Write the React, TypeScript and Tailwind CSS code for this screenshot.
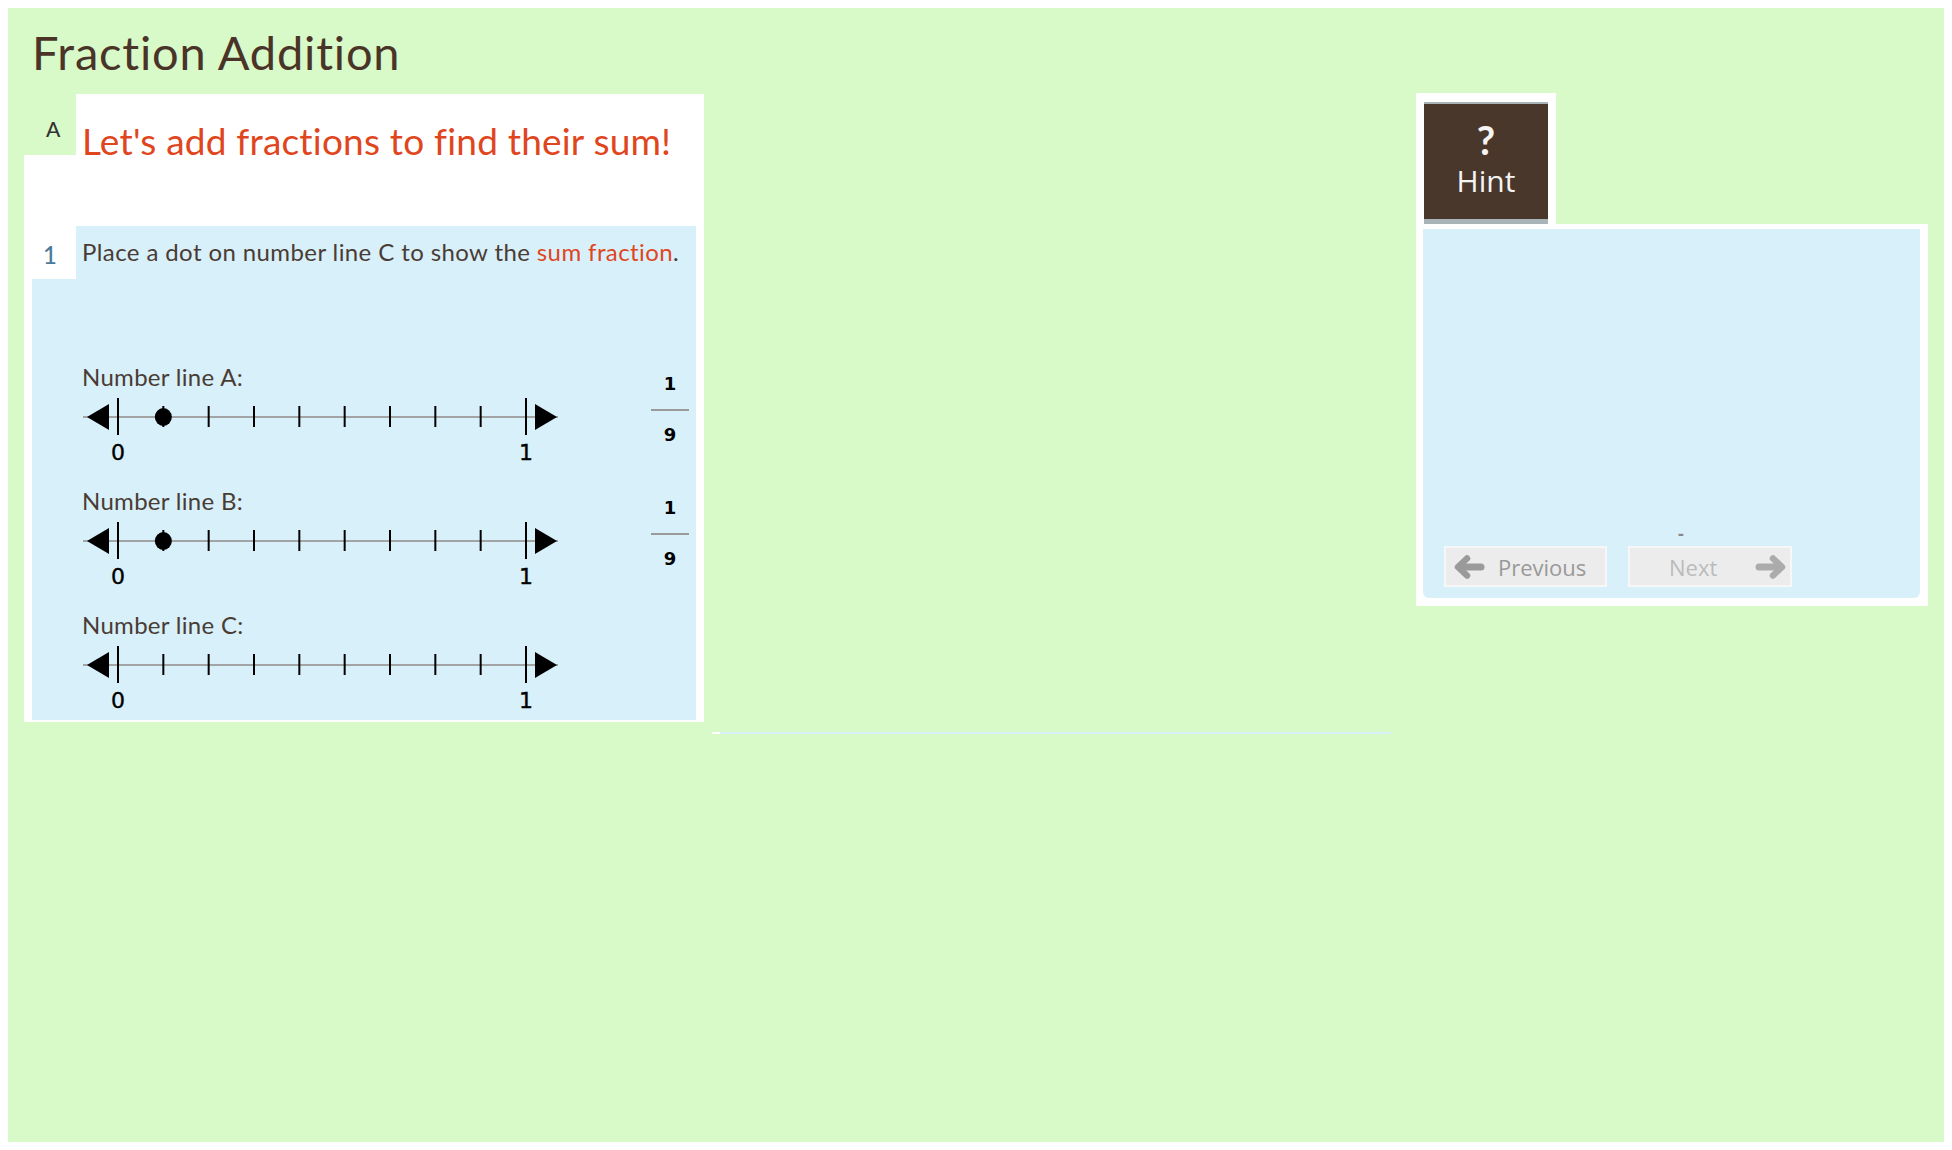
const body = { fontFamily: "Lato, 'Open Sans', sans-serif" };
const ui = { fontFamily: "'Open Sans', 'Noto Sans', sans-serif" };
const digits = { fontFamily: "'DejaVu Sans', Verdana, sans-serif" };

const NumberLine = ({ dot }: { dot?: boolean }) => {
  const step = 408 / 9;
  const ticks = Array.from({ length: 8 }).map((_, i) => 38 + (i + 1) * step);

  return (
    <svg width="480" height="70" viewBox="0 0 480 70" className="block">
      <line x1="3" y1="22" x2="478" y2="22" stroke="#a3a3a3" strokeWidth="2" />
      <polygon points="7,22 29,9 29,35" fill="#000" />
      <polygon points="477,22 455,9 455,35" fill="#000" />
      <line x1="38" y1="3" x2="38" y2="40" stroke="#000" strokeWidth="2" />
      <line x1="446" y1="3" x2="446" y2="40" stroke="#000" strokeWidth="2" />
      {ticks.map((x) => (
        <line key={x} x1={x} y1="11" x2={x} y2="32" stroke="#000" strokeWidth="2" />
      ))}
      {dot && <ellipse cx={38 + step} cy="22" rx="8.5" ry="9" fill="#000" />}
      <text x="38" y="65" textAnchor="middle" fontSize="22" fill="#000" stroke="#000" strokeWidth="0.4" style={digits}>
        0
      </text>
      <text x="446" y="65" textAnchor="middle" fontSize="22" fill="#000" stroke="#000" strokeWidth="0.4" style={digits}>
        1
      </text>
    </svg>
  );
};

// thick arrow like the hint pager buttons
const Arrow = ({ dir, color }: { dir: "left" | "right"; color: string }) => (
  <svg width="31" height="24" viewBox="0 0 31 24" className={dir === "right" ? "-scale-x-100" : ""}>
    <line x1="7" y1="12" x2="27" y2="12" stroke={color} strokeWidth="7" strokeLinecap="round" />
    <polyline points="13,3.5 4,12 13,20.5" fill="none" stroke={color} strokeWidth="6.5" strokeLinecap="round" strokeLinejoin="round" />
  </svg>
);

const Fraction = () => (
  <div className="flex w-[38px] flex-col items-center pt-[19px] text-[18px] leading-none text-black" style={digits}>
    <span className="font-semibold">1</span>
    <div className="mt-[16px] h-[2px] w-full bg-[#9a9a9a]" />
    <span className="mt-[15px] font-semibold">9</span>
  </div>
);

const Section = ({ name, dot, fraction, last }: { name: string; dot?: boolean; fraction?: boolean; last?: boolean }) => (
  <div className={`flex ${last ? "h-[116px]" : "h-[124px]"}`}>
    <div className="w-[480px]">
      <div className="h-[39px] pt-[9px] pl-[2px] text-[24px] leading-none tracking-[0.3px] text-[#4a3c34]">{name}</div>
      <NumberLine dot={dot} />
    </div>
    {fraction && (
      <div className="ml-[91px]">
        <Fraction />
      </div>
    )}
  </div>
);

const LeftPanel = () => (
  <div className="mt-px w-[680px] shrink-0" style={body}>
    <div className="flex h-[61px]">
      <div className="w-[52px] pt-[24px] pl-[22px] text-[21px] leading-none font-medium text-[#333]">A</div>
      <div className="flex-1 bg-white pt-[28px] pl-[6px] text-[37px] leading-none tracking-[0.2px] text-[#e0461e]">
        Let's add fractions to find their sum!
      </div>
    </div>
    <div className="h-[567px] bg-white px-2 pt-[71px] pb-[2px]">
      <div className="flex h-[53px]">
        <div className="w-[44px] bg-white pt-[17px] pl-[11px] text-[24px] leading-none font-medium text-[#4a7a9a]">1</div>
        <div className="flex-1 bg-[#d8f0fa] pt-[14px] pl-[6px] text-[24px] leading-none tracking-[0.4px] text-[#4a3c34]">
          Place a dot on number line C to show the <span className="text-[#e0461e]">sum fraction</span>.
        </div>
      </div>
      <div className="h-[441px] bg-[#d8f0fa] pt-[77px] pl-12">
        <Section name="Number line A:" dot fraction />
        <Section name="Number line B:" dot fraction />
        <Section name="Number line C:" last />
      </div>
    </div>
  </div>
);

const RightPanel = () => (
  <div className="w-[512px] shrink-0" style={ui}>
    <div className="w-[140px] bg-white px-2 pt-[9px]">
      <div className="flex h-[122px] flex-col items-center border-t-2 border-b-[5px] border-[#a9b4b8] bg-[#4a372c] pt-[16px] text-[#f4f4f4]">
        <span className="h-[38px] text-[40px] font-bold leading-none" style={body}>?</span>
        <span className="mt-[8px] text-[30px] leading-none">Hint</span>
      </div>
    </div>
    <div className="h-[382px] bg-white pt-[5px] pr-[8px] pb-[8px] pl-[7px]">
      <div className="flex h-full flex-col justify-end rounded-b-md bg-[#d8f0fa] pb-[11px] pl-[21px]">
        <div className="pb-[4px] pl-[234px] text-[18px] leading-none font-bold text-[#888]">-</div>
        <div className="flex gap-[21px]">
          <div className="flex h-[41px] w-[163px] items-center border-2 border-[#f7f7f7] bg-[#ececec] pl-[8px] text-[22px] text-[#999]">
            <Arrow dir="left" color="#9a9a9a" />
            <span className="ml-[13px] leading-none">Previous</span>
          </div>
          <div className="flex h-[41px] w-[164px] items-center border-2 border-[#f7f7f7] bg-[#ececec] pl-[39px] text-[22px] text-[#bbb]">
            <span className="leading-none">Next</span>
            <div className="mr-[4px] ml-auto flex">
              <Arrow dir="right" color="#ababab" />
            </div>
          </div>
        </div>
      </div>
    </div>
  </div>
);

export default function App() {
  return (
    <div className="h-[1150px] bg-white p-2">
      <div className="h-full bg-[#d8f9c8] pr-4 pl-4">
        <h1 className="pt-[21px] pl-[8px] text-[47px] leading-none font-normal tracking-[0.8px] text-[#4a3428]" style={body}>
          Fraction Addition
        </h1>
        <div className="mt-[17px] flex">
          <LeftPanel />
          <div className="w-[712px] shrink-0 pt-[639px] pl-2">
            <div className="flex h-[2px] w-[679px]">
              <div className="w-2 bg-white" />
              <div className="flex-1 bg-[#d8eff8]" />
            </div>
          </div>
          <RightPanel />
        </div>
      </div>
    </div>
  );
}
